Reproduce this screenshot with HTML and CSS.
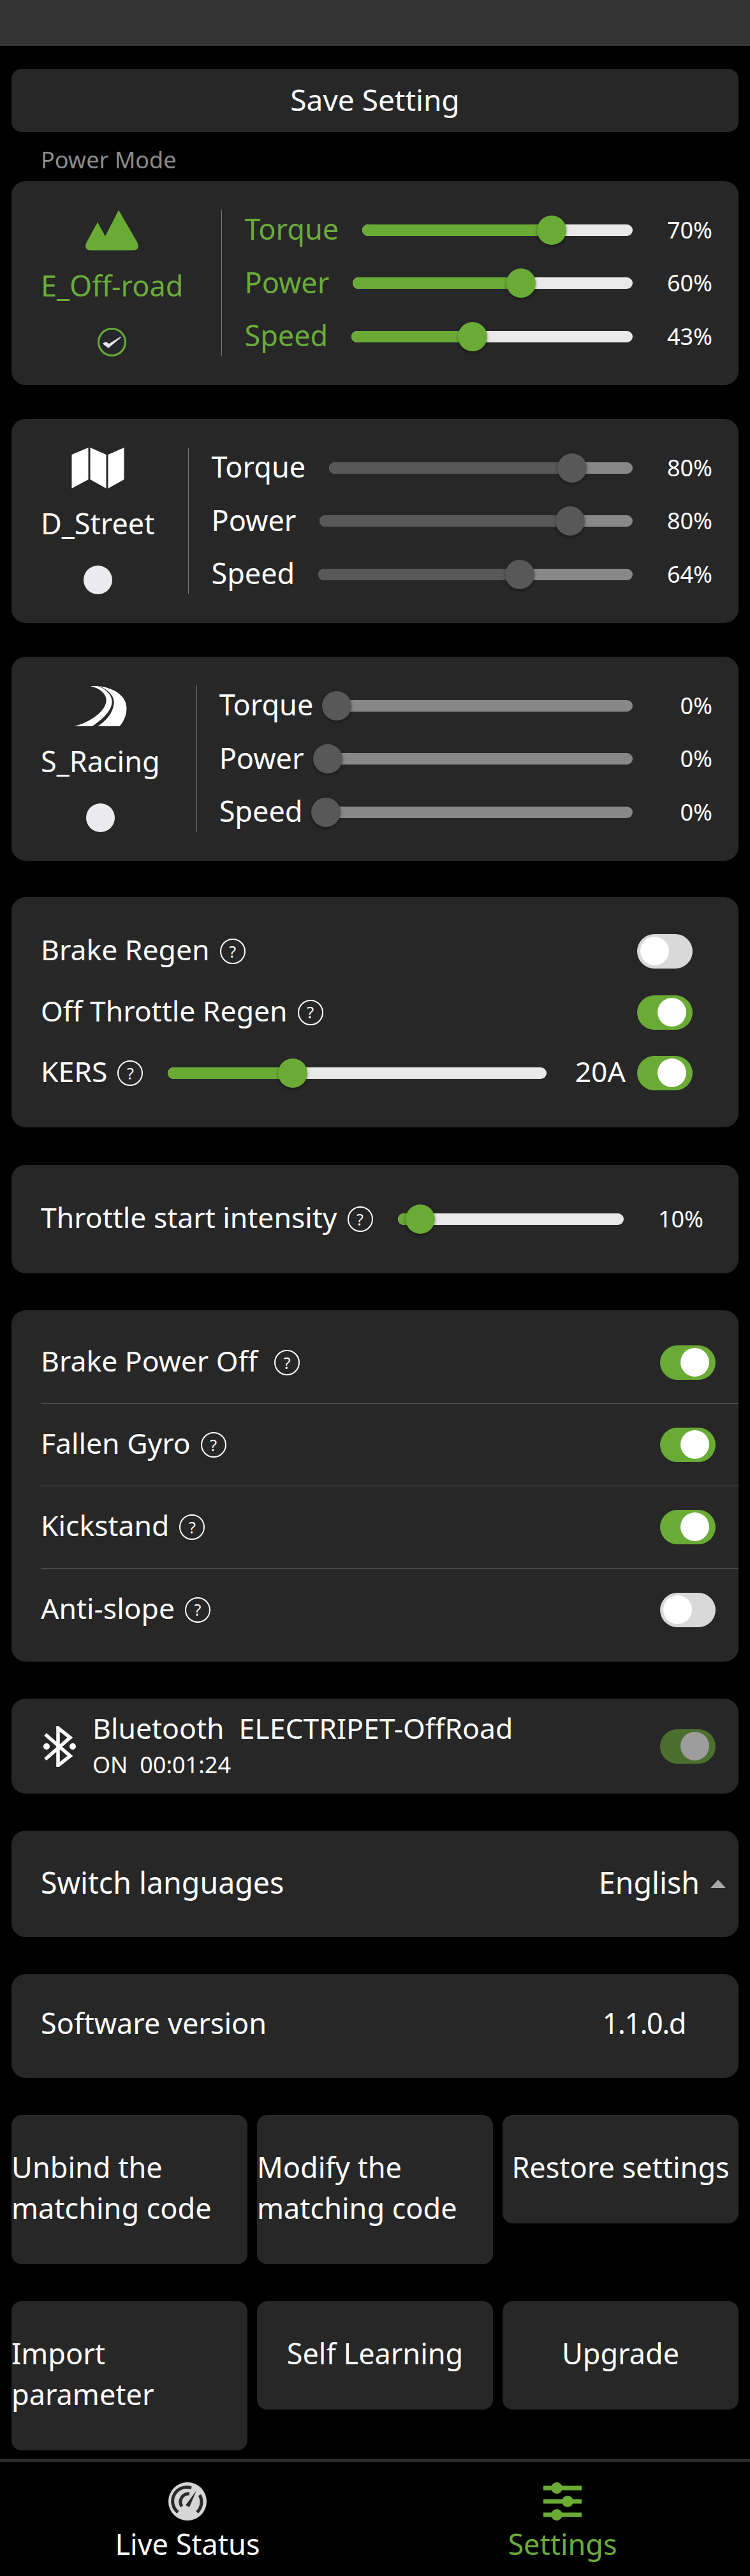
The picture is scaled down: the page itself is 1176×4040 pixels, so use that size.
FILE: index.html
```html
<!DOCTYPE html>
<html lang="en">
	<head>
		<meta charset="UTF-8">
		<title>Settings</title>
		<link rel="stylesheet" href="styles.css">
	</head>
	<body>
		<div class="top-bar"></div>
		<div class="main-content">
			<div class="save-button">Save Setting</div>
			<div class="section-label">Power Mode</div>

			<div class="card mode-card mode-active mode-offroad">
				<div class="mode-info">
					<svg class="mode-icon" viewBox="0 0 83 63"><path d="M52 0 L81 50 Q87 63 74 63 H9 Q-4 63 2 50 L19 19 L31 41 Z" fill="#6aab36"/></svg>
					<div class="mode-name">E_Off-road</div>
					<svg class="mode-radio" viewBox="0 0 45 45"><circle cx="22.5" cy="22.5" r="21" fill="#25272a" stroke="#6aab36" stroke-width="3"/><path d="M9 25 L17 31 L36 15 L18 26 L13 23 Z" fill="#e6e6e6" stroke="#e6e6e6" stroke-width="1.5" stroke-linejoin="round"/></svg>
				</div>
				<div class="mode-sliders">
					<div class="slider-row">
						<span class="slider-label">Torque</span>
						<div class="slider"><div class="slider-fill" style="width: 70%"><span class="slider-thumb"></span></div></div>
						<span class="slider-value">70%</span>
					</div>
					<div class="slider-row">
						<span class="slider-label">Power</span>
						<div class="slider"><div class="slider-fill" style="width: 60%"><span class="slider-thumb"></span></div></div>
						<span class="slider-value">60%</span>
					</div>
					<div class="slider-row">
						<span class="slider-label">Speed</span>
						<div class="slider"><div class="slider-fill" style="width: 43%"><span class="slider-thumb"></span></div></div>
						<span class="slider-value">43%</span>
					</div>
				</div>
			</div>

			<div class="card mode-card mode-idle mode-street">
				<div class="mode-info">
					<svg class="mode-icon" viewBox="0 0 82 64"><path d="M0 11 L26 0 V50 L0 64 Z M29 0 L54 11 V64 L29 50 Z M57 11 L82 0 V50 L57 64 Z" fill="#fff"/></svg>
					<div class="mode-name">D_Street</div>
					<span class="mode-dot"></span>
				</div>
				<div class="mode-sliders">
					<div class="slider-row">
						<span class="slider-label">Torque</span>
						<div class="slider"><div class="slider-fill" style="width: 80%"><span class="slider-thumb"></span></div></div>
						<span class="slider-value">80%</span>
					</div>
					<div class="slider-row">
						<span class="slider-label">Power</span>
						<div class="slider"><div class="slider-fill" style="width: 80%"><span class="slider-thumb"></span></div></div>
						<span class="slider-value">80%</span>
					</div>
					<div class="slider-row">
						<span class="slider-label">Speed</span>
						<div class="slider"><div class="slider-fill" style="width: 64%"><span class="slider-thumb"></span></div></div>
						<span class="slider-value">64%</span>
					</div>
				</div>
			</div>

			<div class="card mode-card mode-idle mode-last">
				<div class="mode-info">
					<svg class="mode-icon" viewBox="0 0 82 64"><path d="M25 1 C40 4 52 14 50 26 C47 42 24 58 0 64 H28 C46 52 60 38 59 24 C58 13 48 5 37 1 Z M39 1 C62 4 82 16 82 36 C82 46 78 56 71 64 H37 C52 54 63 40 62 24 C61 14 51 6 39 1 Z" fill="#fff"/></svg>
					<div class="mode-name">S_Racing</div>
					<span class="mode-dot"></span>
				</div>
				<div class="mode-sliders">
					<div class="slider-row">
						<span class="slider-label">Torque</span>
						<div class="slider"><div class="slider-fill" style="width: 0%"><span class="slider-thumb"></span></div></div>
						<span class="slider-value">0%</span>
					</div>
					<div class="slider-row">
						<span class="slider-label">Power</span>
						<div class="slider"><div class="slider-fill" style="width: 0%"><span class="slider-thumb"></span></div></div>
						<span class="slider-value">0%</span>
					</div>
					<div class="slider-row">
						<span class="slider-label">Speed</span>
						<div class="slider"><div class="slider-fill" style="width: 0%"><span class="slider-thumb"></span></div></div>
						<span class="slider-value">0%</span>
					</div>
				</div>
			</div>

			<div class="card regen-card">
				<div class="regen-row">
					<span class="row-title">Brake Regen</span>
					<span class="help">?</span>
					<span class="toggle"><span class="toggle-knob"></span></span>
				</div>
				<div class="regen-row">
					<span class="row-title">Off Throttle Regen</span>
					<span class="help">?</span>
					<span class="toggle toggle-on"><span class="toggle-knob"></span></span>
				</div>
				<div class="regen-row">
					<span class="row-title">KERS</span>
					<span class="help">?</span>
					<div class="slider kers-slider"><div class="slider-fill" style="width: 33%"><span class="slider-thumb"></span></div></div>
					<span class="row-title">20A</span>
					<span class="toggle toggle-on kers-toggle"><span class="toggle-knob"></span></span>
				</div>
			</div>

			<div class="card throttle-card">
				<span class="row-title">Throttle start intensity</span>
				<span class="help">?</span>
				<div class="slider throttle-slider"><div class="slider-fill" style="width: 10%"><span class="slider-thumb"></span></div></div>
				<span class="slider-value">10%</span>
			</div>

			<div class="card switch-card">
				<div class="switch-row">
					<span class="row-title">Brake Power Off</span>
					<span class="help help-wide">?</span>
					<span class="toggle toggle-on"><span class="toggle-knob"></span></span>
				</div>
				<div class="switch-row">
					<span class="row-title">Fallen Gyro</span>
					<span class="help">?</span>
					<span class="toggle toggle-on"><span class="toggle-knob"></span></span>
				</div>
				<div class="switch-row">
					<span class="row-title">Kickstand</span>
					<span class="help">?</span>
					<span class="toggle toggle-on"><span class="toggle-knob"></span></span>
				</div>
				<div class="switch-row">
					<span class="row-title">Anti-slope</span>
					<span class="help">?</span>
					<span class="toggle"><span class="toggle-knob"></span></span>
				</div>
			</div>

			<div class="card bluetooth-card">
				<svg class="bluetooth-icon" viewBox="0 0 52 64">
					<path d="M4 13 L43 47 L24 62 V3 L43 18 L4 52" fill="none" stroke="#fff" stroke-width="5.5"/>
					<circle cx="6" cy="32" r="5" fill="#fff"/>
					<circle cx="47" cy="32" r="5" fill="#fff"/>
				</svg>
				<div class="bluetooth-text">
					<div class="bluetooth-name">Bluetooth&nbsp; ELECTRIPET-OffRoad</div>
					<div class="bluetooth-status">ON&nbsp; 00:01:24</div>
				</div>
				<span class="toggle toggle-on toggle-dim"><span class="toggle-knob"></span></span>
			</div>

			<div class="card language-card">
				<span class="row-title language-text">Switch languages</span>
				<span class="row-title language-text language-value">English</span>
				<span class="language-arrow"></span>
			</div>

			<div class="card version-card">
				<span class="row-title version-text">Software version</span>
				<span class="row-title version-text version-value">1.1.0.d</span>
			</div>

			<div class="action-grid">
				<div class="action-button"><span>Unbind the matching code</span></div>
				<div class="action-button"><span>Modify the matching code</span></div>
				<div class="action-button"><span>Restore settings</span></div>
				<div class="action-button"><span>Import parameter</span></div>
				<div class="action-button"><span>Self Learning</span></div>
				<div class="action-button"><span>Upgrade</span></div>
			</div>
		</div>

		<footer class="tab-bar">
			<div class="tab">
				<svg class="tab-icon" viewBox="0 0 60 60">
					<circle cx="30" cy="30" r="30" fill="#d6d6d6"/>
					<path d="M15 47 A22 22 0 0 1 36 9 M49 20 A22 22 0 0 1 45 47" fill="none" stroke="#2a2a2a" stroke-width="5"/>
					<path d="M21 38 A13 13 0 0 1 33 18" fill="none" stroke="#2a2a2a" stroke-width="5"/>
					<path d="M27 36 L44 13 L33 39 Z" fill="#2a2a2a"/>
				</svg>
				<span class="tab-label">Live Status</span>
			</div>
			<div class="tab tab-active">
				<svg class="tab-icon" viewBox="0 0 60 60">
					<path d="M0 9 H60 M0 30 H60 M0 51 H60" stroke="#6aab36" stroke-width="7"/>
					<circle cx="21" cy="9" r="9" fill="#6aab36"/>
					<circle cx="38" cy="30" r="9" fill="#6aab36"/>
					<circle cx="21" cy="51" r="9" fill="#6aab36"/>
				</svg>
				<span class="tab-label">Settings</span>
			</div>
		</footer>
	</body>
</html>
```

FILE: styles.css
```css
*, *::before, *::after {
	box-sizing: border-box;
}

html, body {
	margin: 0;
	padding: 0;
}

body {
	display: flex;
	flex-direction: column;
	min-height: 4040px;
	background: #000;
	color: #fff;
	font-family: "Noto Sans", sans-serif;
	font-size: 45px;
	line-height: 64px;
}

.top-bar {
	height: 72px;
	background: #333;
}

.main-content {
	display: flex;
	flex-direction: column;
	flex-grow: 1;
	padding: 36px 18px 0;
}

.save-button {
	display: flex;
	align-items: center;
	justify-content: center;
	height: 99px;
	padding-bottom: 3px;
	background: #272727;
	border-radius: 16px;
	font-size: 46px;
}

.section-label {
	margin: 19px 0 9px 46px;
	color: #8c8c8c;
	font-size: 36px;
	line-height: 49px;
}

.card {
	background: #272727;
	border-radius: 22px;
}

/* power modes */
.mode-card {
	display: flex;
	height: 320px;
	margin-bottom: 53px;
	padding: 44.5px 41px 45.5px 46px;
}

.mode-last {
	margin-bottom: 57px;
}

.mode-info {
	display: flex;
	flex-direction: column;
	align-items: center;
	justify-content: space-between;
	padding-right: 57px;
}

.mode-offroad .mode-info {
	padding-right: 60px;
}

.mode-street .mode-info {
	padding-right: 53px;
}

.mode-icon {
	display: block;
	width: 83px;
	height: 64px;
}

.mode-name {
	margin-bottom: 10px;
	line-height: 56px;
}

.mode-active .mode-name,
.mode-active .slider-label {
	color: #6aab3c;
}

.mode-radio {
	display: block;
	width: 45px;
	height: 45px;
}

.mode-dot {
	width: 45px;
	height: 45px;
	background: #ececee;
	border-radius: 50%;
}

.mode-sliders {
	display: flex;
	flex-direction: column;
	flex-grow: 1;
	gap: 19.5px;
	padding-left: 35px;
	border-left: 1px solid #777;
}

.slider-row {
	display: flex;
	align-items: center;
	height: 64px;
}

.slider-label {
	padding-bottom: 3px;
}

.slider-row .slider {
	margin-left: 37px;
}

.slider {
	flex: 1 1 0;
	height: 18px;
	background: #e9e9e9;
	border-radius: 9px;
}

.slider-fill {
	position: relative;
	height: 100%;
	background: #6aab36;
	border-radius: 9px 0 0 9px;
}

.slider-thumb {
	position: absolute;
	top: -14px;
	right: -23px;
	width: 46px;
	height: 46px;
	background: #6aab36;
	border-radius: 50%;
	box-shadow: 0 2px 5px rgba(0, 0, 0, 0.4);
}

.mode-idle .slider {
	background: #888;
}

.mode-idle .slider-fill,
.mode-idle .slider-thumb {
	background: #585858;
}

.slider-value {
	flex: 0 0 125px;
	font-size: 36px;
	text-align: right;
}

.row-title {
	padding-bottom: 6px;
	font-size: 44.5px;
}

.help {
	display: flex;
	flex: 0 0 auto;
	align-items: center;
	justify-content: center;
	width: 40px;
	height: 40px;
	margin-left: 16px;
	border: 2.5px solid #fff;
	border-radius: 50%;
	font-size: 25px;
	line-height: 1;
}

.help-wide {
	margin-left: 26px;
}

.toggle {
	position: relative;
	flex: 0 0 auto;
	width: 87px;
	height: 54px;
	margin-left: auto;
	background: #d9d9d9;
	border-radius: 27px;
}

.toggle-knob {
	position: absolute;
	top: 4px;
	left: 5px;
	width: 45px;
	height: 45px;
	background: #fff;
	border-radius: 50%;
}

.toggle-on {
	background: #6aab36;
}

.toggle-on .toggle-knob {
	left: 32px;
}

.toggle-dim {
	opacity: 0.55;
}

/* regen */
.regen-card {
	display: flex;
	flex-direction: column;
	gap: 29.5px;
	margin-bottom: 59px;
	padding: 52px 72px 52px 46px;
}

.regen-row {
	display: flex;
	align-items: center;
	height: 66px;
}

.kers-slider {
	margin: 0 45px 0 39px;
}

.kers-toggle {
	margin-left: 18px;
}

.throttle-card {
	display: flex;
	align-items: center;
	height: 170px;
	margin-bottom: 58px;
	padding: 0 55px 0 46px;
}

.throttle-slider {
	margin-left: 39px;
}

/* switches */
.switch-card {
	margin-bottom: 58px;
	padding: 18px 0 17px 46px;
}

.switch-row {
	display: flex;
	align-items: center;
	height: 129px;
	padding-right: 36px;
	border-bottom: 1px solid #5f5f5f;
}

.switch-row:last-child {
	border-bottom: 0;
}

.bluetooth-card {
	display: flex;
	align-items: center;
	height: 149px;
	margin-bottom: 58px;
	padding: 0 36px 0 49px;
}

.bluetooth-icon {
	flex: 0 0 auto;
	width: 52px;
	height: 64px;
	margin-right: 26px;
}

.bluetooth-name {
	font-size: 44.5px;
	line-height: 58px;
}

.bluetooth-status {
	font-size: 36px;
	line-height: 58px;
}

.language-card {
	display: flex;
	align-items: center;
	height: 167px;
	margin-bottom: 58px;
	padding: 0 20px 0 46px;
}

.language-text {
	font-size: 46.5px;
}

.language-value {
	margin-left: auto;
}

.language-arrow {
	width: 0;
	height: 0;
	margin-left: 17px;
	border-right: 12.5px solid transparent;
	border-bottom: 13px solid #aaa;
	border-left: 12.5px solid transparent;
}

.version-card {
	display: flex;
	align-items: center;
	justify-content: space-between;
	height: 163px;
	margin-bottom: 58px;
	padding: 0 83px 4px 46px;
}

.version-text {
	font-size: 45px;
}

.version-value {
	letter-spacing: -1.5px;
}

/* bottom buttons */
.action-grid {
	display: grid;
	grid-template-columns: repeat(3, 370px);
	gap: 58px 15px;
	align-items: start;
}

.action-button {
	display: flex;
	justify-content: center;
	padding: 50px 0 56px;
	background: #272727;
	border-radius: 16px;
}

.tab-bar {
	display: flex;
	margin-top: 13px;
	padding: 32px 0 19px;
	border-top: 5px solid #2a2a2a;
}

.tab {
	display: flex;
	flex: 1 1 0;
	flex-direction: column;
	align-items: center;
	gap: 5px;
}

.tab-icon {
	display: block;
	width: 60px;
	height: 60px;
}

.tab-active .tab-label {
	color: #6aab3c;
}
```
